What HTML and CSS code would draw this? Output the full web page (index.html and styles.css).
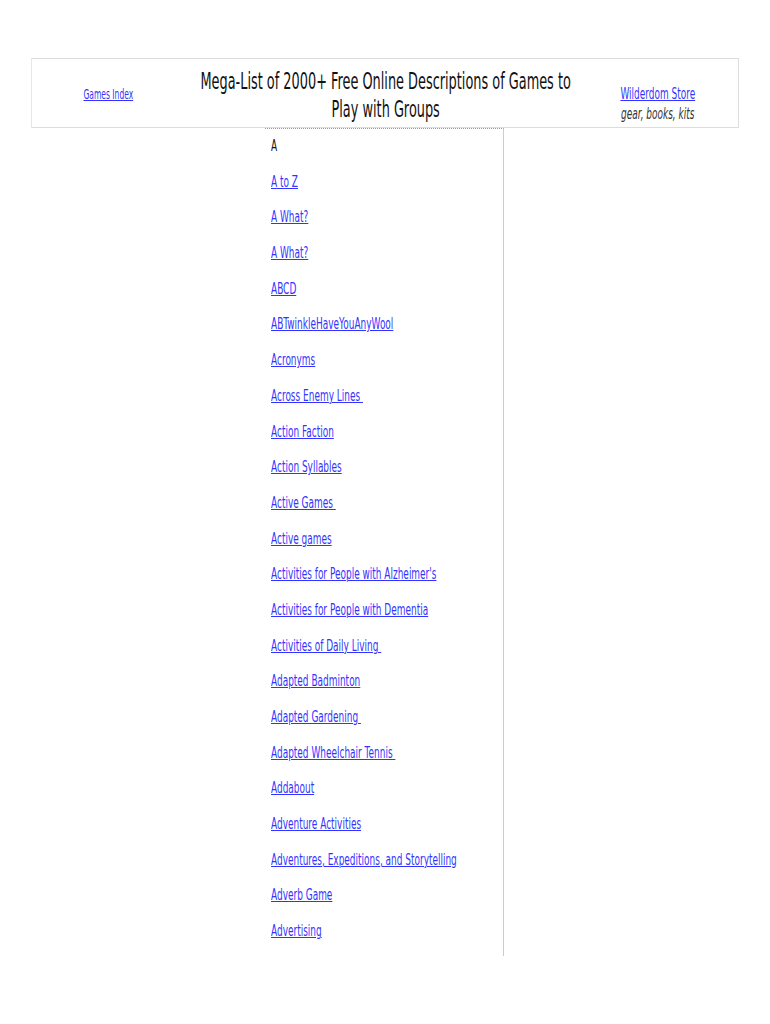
FILE: index.html
```html
<!doctype html>
<html lang="en">
<head>
<meta charset="UTF-8">
<title>Mega-List of 2000+ Free Online Descriptions of Games to Play with Groups</title>
<link rel="stylesheet" href="styles.css">
</head>
<body>
<div class="page">
	<div class="head">
		<div class="cell left"><span class="sq"><a href="#">Games Index</a></span></div>
		<div class="cell mid"><h1 class="sq">Mega-List of 2000+ Free Online Descriptions of Games to<br>Play with Groups</h1></div>
		<div class="cell right"><span class="sq"><a href="#">Wilderdom Store</a><br><i>gear, books, kits</i></span></div>
	</div>
	<div class="list">
		<p class="letter"><span class="sq">A</span></p>
		<p><a class="sq" href="#">A to Z</a></p>
		<p><a class="sq" href="#">A What?</a></p>
		<p><a class="sq" href="#">A What?</a></p>
		<p><a class="sq" href="#">ABCD</a></p>
		<p><a class="sq" href="#">ABTwinkleHaveYouAnyWool</a></p>
		<p><a class="sq" href="#">Acronyms</a></p>
		<p><a class="sq" href="#">Across Enemy Lines&nbsp;</a></p>
		<p><a class="sq" href="#">Action Faction</a></p>
		<p><a class="sq" href="#">Action Syllables</a></p>
		<p><a class="sq" href="#">Active Games&nbsp;</a></p>
		<p><a class="sq" href="#">Active games</a></p>
		<p><a class="sq" href="#">Activities for People with Alzheimer's</a></p>
		<p><a class="sq" href="#">Activities for People with Dementia</a></p>
		<p><a class="sq" href="#">Activities of Daily Living&nbsp;</a></p>
		<p><a class="sq" href="#">Adapted Badminton</a></p>
		<p><a class="sq" href="#">Adapted Gardening&nbsp;</a></p>
		<p><a class="sq" href="#">Adapted Wheelchair Tennis&nbsp;</a></p>
		<p><a class="sq" href="#">Addabout</a></p>
		<p><a class="sq" href="#">Adventure Activities</a></p>
		<p><a class="sq" href="#">Adventures, Expeditions, and Storytelling</a></p>
		<p><a class="sq" href="#">Adverb Game</a></p>
		<p><a class="sq" href="#">Advertising</a></p>
	</div>
</div>
</body>
</html>
```

FILE: styles.css
```css
*{margin:0;padding:0;}
body{background:#fff;font-family:"DejaVu Sans",sans-serif;color:#222;}
a{color:#33f;}
/* the page text is drawn very narrow, squeeze it */
.sq{display:inline-block;white-space:nowrap;transform:scaleX(.56);}
.page{padding-top:58px;}
.head{
	margin:0 31px;
	height:68px;
	border:1px solid #ddd;
	border-left-color:#e4e4ff;
	display:flex;
	align-items:center;
}
.cell{display:flex;justify-content:center;}
.cell .sq{flex-shrink:0;text-align:center;}
.left{width:152px;font-size:13.5px;padding-top:2px;}
.mid{width:404px;padding-top:4px;}
.mid h1{font-weight:normal;font-size:23px;line-height:28px;color:#111;}
.right{flex:1;font-size:16px;line-height:20px;padding:22px 10px 0 0;}
.right i{color:#333;}
.list{
	margin-left:265px;
	width:232px;
	height:819px;
	padding:8px 0 0 6px;
	border-top:1px dotted #999;
	border-right:1px solid #ccc;
	font-size:16px;
}
.list p{height:35.7px;line-height:18px;}
.list .sq{transform-origin:left center;}
.letter{color:#111;}
```
